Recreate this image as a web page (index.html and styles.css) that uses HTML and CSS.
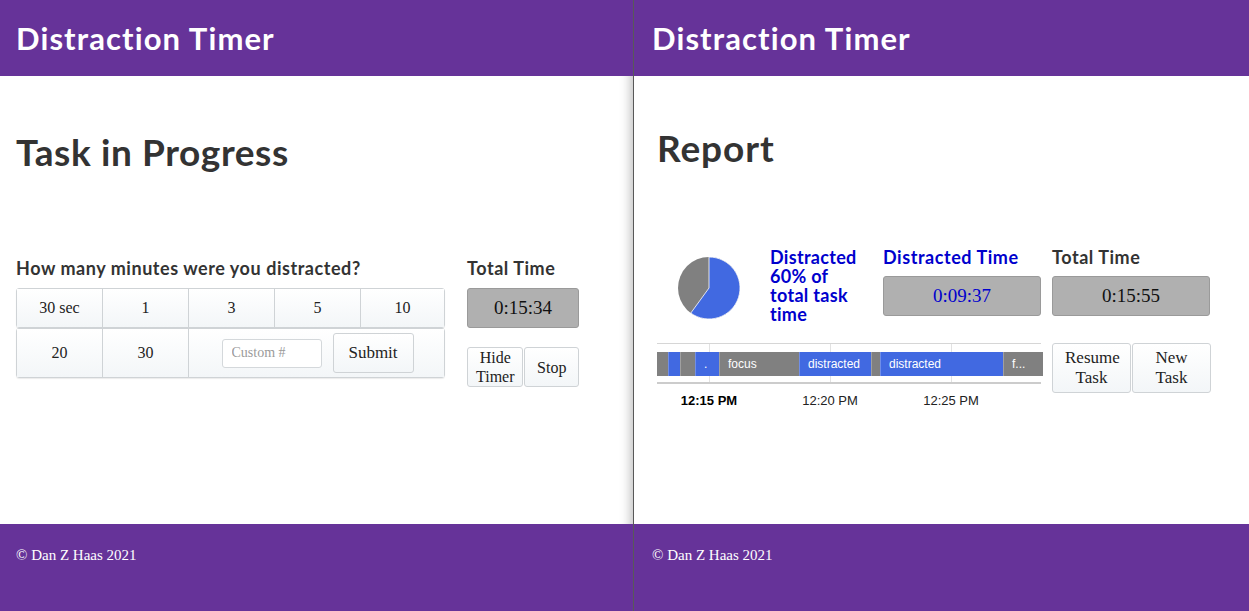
FILE: index.html
```html
<!DOCTYPE html>
<html>
<head>
<meta charset="utf-8">
<link rel="stylesheet" href="styles.css">
</head>
<body>
<div class="panel panel-left">
  <header class="topbar"><h1 class="brand">Distraction Timer</h1></header>
  <main class="content content-left">
    <h2 class="page-title">Task in Progress</h2>
    <div class="task-row">
      <div class="question">
        <h3 class="label">How many minutes were you distracted?</h3>
        <div class="btn-grid">
          <div class="grid-row row1">
            <button class="cell">30 sec</button>
            <button class="cell">1</button>
            <button class="cell">3</button>
            <button class="cell">5</button>
            <button class="cell">10</button>
          </div>
          <div class="grid-row row2">
            <button class="cell">20</button>
            <button class="cell">30</button>
            <div class="cell custom-cell">
              <input class="custom-input" type="text" placeholder="Custom #">
              <button class="submit-btn">Submit</button>
            </div>
          </div>
        </div>
      </div>
      <div class="total">
        <h3 class="label">Total Time</h3>
        <div class="time-box">0:15:34</div>
        <div class="btn-pair">
          <button class="small-btn hide-btn">Hide Timer</button>
          <button class="small-btn stop-btn">Stop</button>
        </div>
      </div>
    </div>
  </main>
  <footer class="foot">© Dan Z Haas 2021</footer>
</div>
<div class="panel panel-right">
  <header class="topbar"><h1 class="brand">Distraction Timer</h1></header>
  <main class="content content-right">
    <h2 class="page-title report-title">Report</h2>
    <div class="report-top">
      <div class="pie-cell">
        <svg class="pie" width="64" height="64" viewBox="-32 -32 64 64">
          <circle cx="0" cy="0" r="31" fill="#808080"/>
          <path d="M0,0 L0,-31 A31,31 0 1,1 -18.22,25.08 Z" fill="#4169e1" stroke="#ffffff" stroke-width="0.8"/>
        </svg>
      </div>
      <div class="pct-text">Distracted 60% of total task time</div>
      <div class="stat">
        <h3 class="label blue">Distracted Time</h3>
        <div class="time-box wide blue-num">0:09:37</div>
      </div>
      <div class="stat">
        <h3 class="label">Total Time</h3>
        <div class="time-box wide">0:15:55</div>
      </div>
    </div>
    <div class="report-bottom">
      <div class="chart">
        <div class="timeline">
          <span class="gridline" style="left:52px"></span>
          <span class="gridline" style="left:173px"></span>
          <span class="gridline" style="left:294px"></span>
          <div class="bar">
            <div class="seg gray" style="width:11px"></div>
            <div class="seg blue-seg" style="width:12px"></div>
            <div class="seg gray" style="width:15px"></div>
            <div class="seg blue-seg" style="width:24px">.</div>
            <div class="seg gray" style="width:80px">focus</div>
            <div class="seg blue-seg" style="width:72px">distracted</div>
            <div class="seg gray" style="width:7px"></div>
            <div class="seg blue-seg" style="width:123px">distracted</div>
            <div class="seg gray" style="width:40px">f...</div>
          </div>
        </div>
        <div class="axis">
          <span class="tick bold" style="left:52px">12:15 PM</span>
          <span class="tick" style="left:173px">12:20 PM</span>
          <span class="tick" style="left:294px">12:25 PM</span>
        </div>
      </div>
      <div class="btn-pair">
        <button class="small-btn big">Resume Task</button>
        <button class="small-btn big">New Task</button>
      </div>
    </div>
  </main>
  <footer class="foot">© Dan Z Haas 2021</footer>
</div>
</body>
</html>
```
FILE: styles.css
```css
* { box-sizing: border-box; }
html, body { margin: 0; padding: 0; }
body {
  display: flex;
  height: 611px;
  overflow: hidden;
  font-family: "Liberation Serif", "DejaVu Serif", serif;
  color: #333;
  background: #fff;
}
.panel {
  display: flex;
  flex-direction: column;
  height: 611px;
}
.panel-left {
  width: 634px;
  border-right: 1px solid rgba(0,0,0,0.65);
}
.panel-right { flex: 1; }
.topbar {
  height: 76px;
  background: #663399;
  padding: 0 16px;
  display: flex;
  align-items: center;
}
.panel-right .topbar { padding-left: 18px; }
.brand {
  margin: 0;
  color: #fff;
  font-family: Lato, "Open Sans", sans-serif;
  font-weight: 700;
  font-size: 31px;
  line-height: 1;
  letter-spacing: 1.1px;
}
.content { flex: 1; }
.content-left {
  padding: 0 16px;
  box-shadow: inset -14px 0 12px -12px rgba(0,0,0,0.28);
}
.content-right { padding: 0 23px; }
.page-title {
  margin: 54px 0 0;
  font-family: Lato, "Open Sans", sans-serif;
  font-weight: 700;
  font-size: 37px;
  line-height: 43px;
  letter-spacing: 0.6px;
  color: #333;
}
.report-title { margin-top: 50px; letter-spacing: 0.9px; }
.label {
  margin: 0;
  font-family: Lato, "Open Sans", sans-serif;
  font-weight: 700;
  font-size: 18px;
  line-height: 22px;
  letter-spacing: 0.55px;
  color: #333;
}
.label.blue { color: #0000cd; }
.task-row {
  display: flex;
  gap: 22px;
  margin-top: 84px;
}
.question { width: 429px; }
.btn-grid { margin-top: 9px; }
.grid-row {
  display: flex;
  border: 1px solid #cfd3d6;
  border-radius: 3px;
  box-shadow: 0 1px 1px rgba(0,0,0,0.08);
}
.row1 { height: 40px; }
.row2 { height: 50px; margin-top: 0; }
.cell {
  width: 86px;
  flex: none;
  border: 0;
  border-right: 1px solid #cfd3d6;
  background: linear-gradient(#ffffff, #f3f6f8);
  font-family: "Liberation Serif", serif;
  font-size: 16px;
  color: #222;
  padding: 0;
  margin: 0;
}
.cell:last-child { border-right: 0; flex: 1; }
.custom-cell {
  display: flex;
  align-items: center;
  justify-content: center;
  gap: 11px;
  padding-left: 2px;
}
.custom-input {
  width: 100px;
  height: 29px;
  border: 1px solid #d4d8db;
  border-radius: 3px;
  font-family: "Liberation Serif", serif;
  font-size: 14px;
  padding: 0 9px;
  color: #333;
  background: #fff;
}
.custom-input::placeholder { color: #9a9a9a; }
.submit-btn {
  width: 81px;
  height: 40px;
  border: 1px solid #cfd3d6;
  border-radius: 3px;
  background: linear-gradient(#ffffff, #f3f6f8);
  font-family: "Liberation Serif", serif;
  font-size: 17px;
  color: #222;
}
.total { width: 112px; }
.time-box {
  margin-top: 9px;
  height: 40px;
  background: #b0b0b0;
  border: 1px solid #9a9a9a;
  border-radius: 3px;
  display: flex;
  align-items: center;
  justify-content: center;
  font-family: "Liberation Serif", serif;
  font-size: 19px;
  color: #111;
}
.time-box.wide { width: 158px; margin-top: 8px; }
.blue-num { color: #0000cd; }
.btn-pair {
  display: flex;
  gap: 1px;
  margin-top: 19px;
}
.small-btn {
  height: 40px;
  border: 1px solid #cfd3d6;
  border-radius: 3px;
  background: linear-gradient(#ffffff, #f3f6f8);
  font-family: "Liberation Serif", serif;
  font-size: 16px;
  line-height: 19px;
  color: #222;
  padding: 0 2px;
}
.hide-btn { width: 57px; }
.stop-btn { width: 55px; }
.small-btn.big {
  width: 79px;
  height: 50px;
  font-size: 17px;
  line-height: 20px;
  padding: 0 12px;
}
.report-top {
  display: flex;
  margin-top: 77px;
}
.pie-cell {
  width: 113px;
  padding: 10px 0 0 20px;
}
.pie { display: block; }
.pct-text {
  width: 113px;
  padding-right: 16px;
  font-family: Lato, "Open Sans", sans-serif;
  font-weight: 700;
  font-size: 18px;
  line-height: 19px;
  letter-spacing: 0.3px;
  color: #0000cd;
  padding-top: 2px;
}
.stat { width: 158px; margin-right: 11px; }
.report-bottom {
  display: flex;
  gap: 11px;
  margin-top: 19px;
}
.report-bottom .btn-pair { margin-top: 0; }
.chart { width: 384px; position: relative; }
.timeline {
  position: relative;
  height: 41px;
  border-top: 1px solid #d6d6d6;
  border-bottom: 2px solid #cccccc;
  padding-top: 8px;
}
.gridline {
  position: absolute;
  top: 0;
  bottom: 0;
  width: 1px;
  background: #e2e2e2;
}
.bar {
  position: relative;
  display: flex;
  height: 24px;
}
.seg {
  flex: none;
  height: 24px;
  overflow: hidden;
  white-space: nowrap;
  font-family: "Liberation Sans", Arial, sans-serif;
  font-size: 12px;
  line-height: 24px;
  color: #fff;
  padding-left: 8px;
  border-left: 1px solid rgba(255,255,255,0.25);
}
.seg:first-child { border-left: 0; }
.gray { background: #808080; }
.blue-seg { background: #4169e1; }
.axis { position: relative; height: 34px; }
.tick {
  position: absolute;
  top: 9px;
  transform: translateX(-50%);
  font-family: "Liberation Sans", Arial, sans-serif;
  font-size: 13px;
  color: #222;
  white-space: nowrap;
}
.tick.bold { font-weight: 700; color: #000; }
.foot {
  height: 87px;
  background: #663399;
  color: #fff;
  font-family: "Liberation Serif", serif;
  font-size: 15px;
  padding: 23px 16px 0;
}
.panel-right .foot { padding-left: 18px; }
```
